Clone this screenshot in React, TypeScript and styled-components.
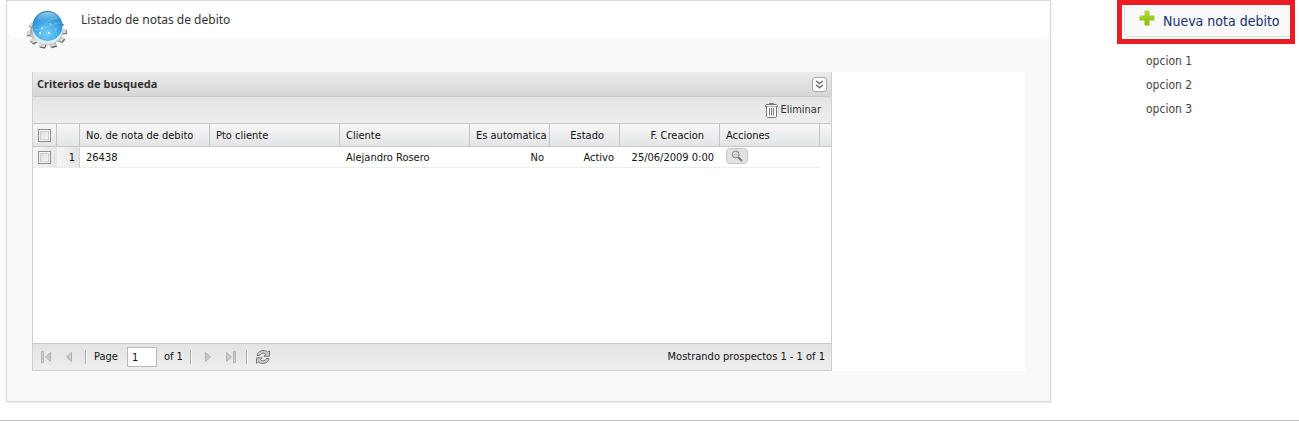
import React from "react";
import styled, { createGlobalStyle } from "styled-components";

const GlobalStyle = createGlobalStyle`
  * { box-sizing: border-box; }
  body {
    margin: 0;
    background: #fff;
    color: #111;
    font: 11px/14px Tahoma, "DejaVu Sans Condensed", "DejaVu Sans", sans-serif;
  }
  button, input { font: inherit; color: inherit; }
`;

const Page = styled.div`
  display: flex;
  align-items: flex-start;
  gap: 66px;
  padding: 0 4px 18px 6px;
  border-bottom: 1px solid #bdbdbd;
`;

const Card = styled.main`
  flex: 1;
  min-width: 0;
  padding: 0 1px 30px;
  background: #f9f9f9;
  border: 1px solid #d9d9d9;
  box-shadow: 0 1px 2px rgba(0, 0, 0, 0.1);
`;

const CardHeader = styled.header`
  display: flex;
  align-items: flex-start;
  gap: 14px;
  height: 36px;
  padding: 9px 19px 0;
  background: #fff;
  border-radius: 0 0 5px 5px;
`;

const Title = styled.h1`
  margin: 0;
  padding-top: 1px;
  color: #333;
  font: 12px/18px "Noto Sans", "Open Sans", sans-serif;
`;

const Content = styled.div`
  margin: 35px 24px 0;
  background: #fff;
`;

const Grid = styled.section`
  width: 800px;
  max-width: 100%;
  border: 1px solid #d0d0d0;
  border-top: 0;
`;

const GridHeader = styled.header`
  display: flex;
  align-items: center;
  justify-content: space-between;
  height: 25px;
  padding: 0 4px;
  background: linear-gradient(#ececec, #d6d6d6);
  border-bottom: 1px solid #cacaca;
`;

const GridTitle = styled.h2`
  margin: 0;
  color: #333;
  font: bold 11px/14px "Noto Sans", "Open Sans", sans-serif;
`;

const CollapseButton = styled.button`
  display: flex;
  width: 15px;
  height: 15px;
  padding: 0;
  align-items: center;
  justify-content: center;
  background: #fafafa;
  border: 1px solid #aaa;
  border-radius: 3px;
`;

const Toolbar = styled.div`
  display: flex;
  justify-content: flex-end;
  height: 27px;
  padding: 0 10px;
  background: linear-gradient(#e4e4e4, #eee);
  border-bottom: 1px solid #c8c8c8;
`;

const ToolButton = styled.button`
  display: flex;
  align-items: center;
  gap: 2px;
  padding: 0;
  color: #333;
  background: none;
  border: 0;
`;

const GridBody = styled.div`
  height: 219px;
  overflow: hidden;
`;

const Table = styled.table`
  width: 100%;
  table-layout: fixed;
  border-collapse: separate;
  border-spacing: 0;
`;

const Col = styled.col<{ $width?: number }>`
  width: ${(p) => (p.$width ? `${p.$width}px` : "auto")};
`;

const Th = styled.th<{ $align?: "right"; $inset?: number }>`
  height: 23px;
  padding: 1px ${(p) => p.$inset ?? 6}px 0 6px;
  font-weight: normal;
  text-align: ${(p) => p.$align ?? "left"};
  white-space: nowrap;
  background: linear-gradient(#f8f8f9, #e3e4e6);
  border-right: 1px solid #c4c4c4;
  border-bottom: 1px solid #c8c8c8;
  &:last-child { border-right: 0; }
`;

const Td = styled.td<{ $align?: "right"; $shaded?: boolean; $blank?: boolean }>`
  height: 21px;
  padding: 1px 6px 0;
  text-align: ${(p) => p.$align ?? "left"};
  white-space: nowrap;
  background: ${(p) => (p.$shaded ? "linear-gradient(90deg, #f6f6f6, #e4e4e4)" : "#fff")};
  border-bottom: 1px solid ${(p) => (p.$blank ? "#fff" : "#ededed")};
`;

const NumberTd = styled(Td)`
  padding: 1px 4px 0;
  border-right: 1px solid #d2d2d2;
`;

const ActionTd = styled(Td)`
  padding: 0 6px;
`;

const Check = styled.input`
  display: block;
  appearance: none;
  width: 13px;
  height: 13px;
  margin: 0 0 0 -1px;
  background: linear-gradient(135deg, #d4d4d4, #fff);
  border: 1px solid #8f8f8f;
  box-shadow: inset 0 0 0 1px #f4f4f4, inset 0 0 0 2px #d0d0d0;
`;

const RowAction = styled.button`
  display: flex;
  align-items: center;
  justify-content: center;
  width: 22px;
  height: 16px;
  margin-bottom: 3px;
  padding: 0;
  background: #e3e3e3;
  border: 1px solid #c6c6c6;
  border-radius: 4px;
`;

const Pager = styled.footer`
  display: flex;
  align-items: center;
  height: 27px;
  padding: 0 6px 0 5px;
  background: linear-gradient(#e3e3e3, #efefef);
  border-top: 1px solid #cacaca;
`;

const PagerButton = styled.button`
  display: flex;
  align-items: center;
  justify-content: center;
  width: 16px;
  height: 16px;
  padding: 0;
  background: none;
  border: 0;
`;

const PagerGroup = styled.div<{ $gap: number; $pad?: number }>`
  display: flex;
  align-items: center;
  gap: ${(p) => p.$gap}px;
  padding: 0 ${(p) => p.$pad ?? 0}px;
`;

const Divider = styled.span`
  width: 2px;
  height: 14px;
  border-left: 1px solid #aaa;
  border-right: 1px solid #fff;
`;

const PageLabel = styled.label`
  display: flex;
  align-items: center;
  gap: 9px;
`;

const PageInput = styled.input`
  width: 30px;
  height: 20px;
  padding: 0 4px;
  background: #fff;
  border: 1px solid #b5b8c8;
`;

const Summary = styled.span`
  margin-left: auto;
`;

const Sidebar = styled.aside`
  flex: 0 0 178px;
`;

const Highlight = styled.div`
  display: flex;
  height: 44px;
  padding: 0 0 2px 2px;
  border: 5px solid #ec1c24;
`;

const NewNote = styled.button`
  display: flex;
  flex: 1;
  align-items: flex-start;
  gap: 8px;
  padding: 5px 0 0 14px;
  color: #15306b;
  font: 14px/22px Tahoma, "DejaVu Sans Condensed", "DejaVu Sans", sans-serif;
  white-space: nowrap;
  background: #f9f9f9;
  border: 1px solid #ddd;
  border-width: 0 0 1px 1px;
  border-radius: 0 0 0 5px;
`;

const Options = styled.ul`
  margin: 5px 0 0;
  padding: 0 0 0 29px;
  list-style: none;
  font-size: 12px;
  line-height: 24px;
`;

const OptionLink = styled.a`
  color: #444;
  text-decoration: none;
`;

const teeth = Array.from({ length: 10 }, (_, i) => i * 36 + 14);

const GlobeGear = () => (
  <svg width="40" height="40" viewBox="0 0 40 40" aria-hidden="true">
    <defs>
      <radialGradient id="globe" cx="48%" cy="75%" r="75%">
        <stop offset="0" stopColor="#74cdf8" />
        <stop offset="0.5" stopColor="#43a9e6" />
        <stop offset="0.85" stopColor="#2b8bd0" />
        <stop offset="1" stopColor="#2474b8" />
      </radialGradient>
      <linearGradient id="metal" x1="0" y1="0" x2="1" y2="1">
        <stop offset="0" stopColor="#777" />
        <stop offset="0.55" stopColor="#e6e6e6" />
        <stop offset="1" stopColor="#999" />
      </linearGradient>
      <linearGradient id="shine" x1="0" y1="0" x2="0" y2="1">
        <stop offset="0" stopColor="#d2eefe" stopOpacity="0.7" />
        <stop offset="1" stopColor="#8bd0f5" stopOpacity="0.1" />
      </linearGradient>
    </defs>
    <g transform="translate(20 23) scale(1 .78)">
      {teeth.map((a) => (
        <path key={a} d="M-3.500 13 L-2.800 20 H2.800 L3.500 13Z" transform={`rotate(${a})`} fill="#6b6b6b" />
      ))}
    </g>
    <g transform="translate(19.500 22) scale(1 .78)">
      {teeth.map((a) => (
        <path key={a} d="M-3.500 12 L-2.600 19.500 H2.600 L3.500 12Z" transform={`rotate(${a})`} fill="#d8d8d8" />
      ))}
      <circle r="16.500" fill="url(#metal)" />
    </g>
    <ellipse cx="20.500" cy="20" rx="15" ry="14" fill="#d9eefb" />
    <circle cx="20.500" cy="16" r="15" fill="url(#globe)" />
    <path d="M9 10C11 4 16 2 21 2s10 3 12 8c-7-2-16 4-24 0Z" fill="url(#shine)" />
    <path d="M7 19c8 3 19-7 26-6M12 27c3-11 7-17 18-19M22 13c4 3 7 7 8 13" fill="none" stroke="#aee0fa" strokeWidth="0.6" opacity="0.6" />
    <g fill="#fff">
      <circle cx="13" cy="23" r="0.9" /><circle cx="22" cy="23" r="0.9" /><circle cx="15" cy="18" r="0.8" />
      <circle cx="23" cy="14" r="0.6" /><circle cx="29" cy="19" r="0.6" />
    </g>
  </svg>
);

const DoubleChevron = () => (
  <svg width="9" height="9" viewBox="0 0 9 9" fill="none" stroke="#666" strokeWidth="1.4" aria-hidden="true">
    <path d="M1.2 1 4.5 3.7 7.8 1M1.2 5 4.5 7.7 7.8 5" />
  </svg>
);

const Trash = () => (
  <svg width="13" height="16" viewBox="0 0 13 16" fill="none" stroke="#777" aria-hidden="true">
    <path d="M4.500 2.500v-1h4v1M.5 4.500v-1l1-1h10l1 1v1Z" fill="#eee" />
    <path d="M1.500 4.500v10l1 1h8l1-1v-10" fill="#fafafa" />
    <path d="M4.500 6v7.500M6.500 6v7.500M8.500 6v7.500" />
  </svg>
);

const Magnifier = () => (
  <svg width="12" height="12" viewBox="0 0 12 12" fill="none" aria-hidden="true">
    <path d="m7 7 4 4" stroke="#777" strokeWidth="2" />
    <circle cx="4.700" cy="4.500" r="3.500" fill="#d3d3d3" stroke="#888" />
    <path d="M2.800 4.500c0-1.200.7-1.800 1.700-1.900" stroke="#fff" />
  </svg>
);

const Arrow = ({ flip, bar }: { flip?: boolean; bar?: boolean }) => (
  <svg width="12" height="12" viewBox="0 0 12 12" aria-hidden="true">
    <g transform={flip ? "matrix(-1 0 0 1 12 0)" : undefined} stroke="#b0b0b0" fill="#ccc">
      <path d={bar ? "M10.500 1.500v9l-5-4.500Z" : "M8.500 1.500v9l-5-4.500Z"} />
      {bar && <path d="M1.500.5h2v11h-2Z" stroke="#b5b5b5" />}
    </g>
  </svg>
);

const Refresh = () => (
  <svg width="16" height="16" viewBox="0 0 16 16" aria-hidden="true">
    <g fill="#c9c9c9" stroke="#717171" strokeWidth="0.9" strokeLinejoin="round">
      <path d="M2 6.500C2.500 3.200 5 1.500 8.200 1.500c2 0 3.300.6 4.300 1.600L14.500 1.700v5.500H8.800l2-1.700C9.900 4.500 9 4.200 8 4.200c-1.800 0-2.600.8-3.300 2.300Z" />
      <path d="M14 9.500c-.5 3.300-3 5-6.200 5-2 0-3.300-.6-4.300-1.600L1.500 14.300V8.800h5.700l-2 1.700c.9 1 1.800 1.300 2.800 1.300 1.800 0 2.600-.8 3.300-2.300Z" />
    </g>
  </svg>
);

const Plus = () => (
  <svg width="16" height="16" viewBox="0 0 16 16" aria-hidden="true">
    <defs>
      <linearGradient id="lime" x1="0" y1="0" x2="0" y2="1">
        <stop offset="0" stopColor="#b8dc3c" />
        <stop offset="1" stopColor="#83bd08" />
      </linearGradient>
    </defs>
    <path d="M5.500.5h5v5H15.500v5h-5V15.500h-5v-5H.5v-5h5Z" fill="url(#lime)" />
  </svg>
);

const columns = [24, 23, 130, 130, 130, 80, 70, 100, 100];
const options = ["opcion 1", "opcion 2", "opcion 3"];

export default function App() {
  return (
    <>
      <GlobalStyle />
      <Page>
        <Card>
          <CardHeader>
            <GlobeGear />
            <Title>Listado de notas de debito</Title>
          </CardHeader>
          <Content>
            <Grid>
              <GridHeader>
                <GridTitle>Criterios de busqueda</GridTitle>
                <CollapseButton aria-label="Expandir"><DoubleChevron /></CollapseButton>
              </GridHeader>
              <Toolbar>
                <ToolButton><Trash />Eliminar</ToolButton>
              </Toolbar>
              <GridBody>
                <Table>
                  <colgroup>
                    {columns.map((w, i) => <Col key={i} $width={w} />)}
                    <Col />
                  </colgroup>
                  <thead>
                    <tr>
                      <Th><Check type="checkbox" aria-label="Seleccionar todo" /></Th>
                      <Th />
                      <Th>No. de nota de debito</Th>
                      <Th>Pto cliente</Th>
                      <Th>Cliente</Th>
                      <Th $align="right">Es automatica</Th>
                      <Th $align="right" $inset={15}>Estado</Th>
                      <Th $align="right" $inset={15}>F. Creacion</Th>
                      <Th>Acciones</Th>
                      <Th />
                    </tr>
                  </thead>
                  <tbody>
                    <tr>
                      <Td $shaded><Check type="checkbox" aria-label="Seleccionar 26438" /></Td>
                      <NumberTd $align="right" $shaded>1</NumberTd>
                      <Td>26438</Td>
                      <Td />
                      <Td>Alejandro Rosero</Td>
                      <Td $align="right">No</Td>
                      <Td $align="right">Activo</Td>
                      <Td $align="right">25/06/2009 0:00</Td>
                      <ActionTd><RowAction aria-label="Ver"><Magnifier /></RowAction></ActionTd>
                      <Td $blank />
                    </tr>
                  </tbody>
                </Table>
              </GridBody>
              <Pager>
                <PagerGroup $gap={7}>
                  <PagerButton aria-label="Primera"><Arrow bar /></PagerButton>
                  <PagerButton aria-label="Anterior"><Arrow /></PagerButton>
                </PagerGroup>
                <PagerGroup $gap={7} $pad={8}>
                  <Divider />
                  <PageLabel>Page<PageInput defaultValue="1" /></PageLabel>
                  <span>of 1</span>
                  <Divider />
                </PagerGroup>
                <PagerGroup $gap={7}>
                  <PagerButton aria-label="Siguiente"><Arrow flip /></PagerButton>
                  <PagerButton aria-label="Última"><Arrow flip bar /></PagerButton>
                  <Divider />
                  <PagerButton aria-label="Actualizar"><Refresh /></PagerButton>
                </PagerGroup>
                <Summary>Mostrando prospectos 1 - 1 of 1</Summary>
              </Pager>
            </Grid>
          </Content>
        </Card>
        <Sidebar>
          <Highlight>
            <NewNote><Plus />Nueva nota debito</NewNote>
          </Highlight>
          <Options>
            {options.map((o) => (
              <li key={o}><OptionLink href="#">{o}</OptionLink></li>
            ))}
          </Options>
        </Sidebar>
      </Page>
    </>
  );
}
